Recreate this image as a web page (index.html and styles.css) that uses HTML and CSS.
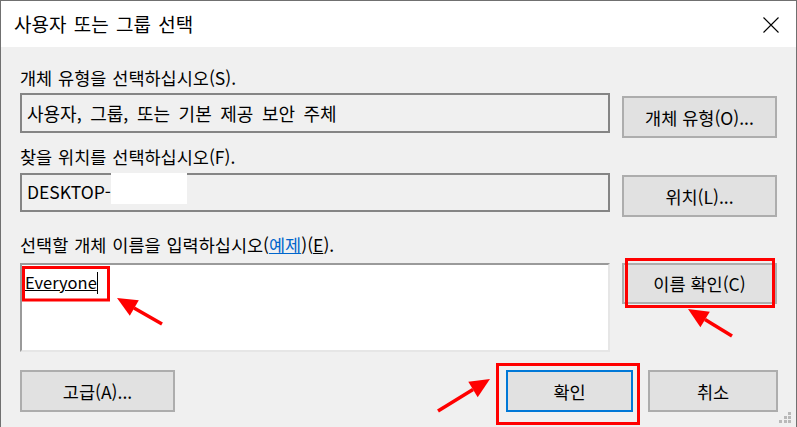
FILE: index.html
```html
<!DOCTYPE html>
<html lang="ko">
  <head>
    <meta charset="UTF-8" />
    <meta name="viewport" content="width=device-width, initial-scale=1.0" />
    <title>사용자 또는 그룹 선택</title>
    <link rel="stylesheet" href="styles.css">
  </head>
  <body>
    <div class="window">
      <div class="titlebar">
        <span class="title">사용자 또는 그룹 선택</span>
        <svg class="close-icon" width="16" height="16" viewBox="0 0 16 16">
          <path d="M0.5 0.5 L15.5 15.5 M15.5 0.5 L0.5 15.5" stroke="#000" stroke-width="1.1" fill="none" />
        </svg>
      </div>

      <div class="content">
        <div class="field">
          <div class="field-main">
            <div class="label">개체 유형을 선택하십시오(S).</div>
            <div class="readonly box-type">사용자, 그룹, 또는 기본 제공 보안 주체</div>
          </div>
          <button class="btn side-btn">개체 유형(O)...</button>
        </div>

        <div class="field field-location">
          <div class="field-main">
            <div class="label">찾을 위치를 선택하십시오(F).</div>
            <div class="readonly box-location">
              DESKTOP-<span class="redacted"></span>
            </div>
          </div>
          <button class="btn side-btn">위치(L)...</button>
        </div>

        <div class="field field-names">
          <div class="field-main">
            <div class="label">선택할 개체 이름을 입력하십시오(<a class="link" href="#">예제</a>)(<u>E</u>).</div>
            <div class="names-input">
              <span class="resolved">Everyone</span><span class="caret"></span>
            </div>
          </div>
          <button class="btn side-btn check-btn">이름 확인(C)</button>
        </div>

        <div class="actions">
          <button class="btn advanced-btn">고급(A)...</button>
          <button class="btn ok-btn">확인</button>
          <button class="btn cancel-btn">취소</button>
        </div>
      </div>

      <!-- annotations drawn over the dialog -->
      <svg class="overlay" width="797" height="427" viewBox="0 0 797 427">
        <g fill="none" stroke="#ff0000" stroke-width="3">
          <rect x="23.5" y="267.5" width="85" height="32.5" />
          <rect x="626.5" y="259.5" width="147" height="47" />
          <rect x="497.5" y="364.5" width="141" height="59" />
          <line x1="162" y1="324" x2="134" y2="308" stroke-width="3.5" />
          <line x1="732" y1="336" x2="705" y2="319.5" stroke-width="3.5" />
          <line x1="438" y1="411" x2="473" y2="389.5" stroke-width="3.5" />
        </g>
        <g fill="#ff0000">
          <polygon points="117,298 138.8,300.2 129.8,315.8" />
          <polygon points="688,309 709.8,311.8 700.4,327.2" />
          <polygon points="490,379 477.7,397.2 468.3,381.8" />
        </g>
        <g fill="#b9b9b9">
          <rect x="788" y="412" width="3" height="3" />
          <rect x="784" y="416" width="3" height="3" />
          <rect x="788" y="416" width="3" height="3" />
          <rect x="779" y="420" width="3" height="3" />
          <rect x="784" y="420" width="3" height="3" />
          <rect x="788" y="420" width="3" height="3" />
        </g>
      </svg>
    </div>
  </body>
</html>
```

FILE: styles.css
```css
body {
  margin: 0;
  font-family: "Noto Sans CJK KR", "Noto Sans", sans-serif;
  color: #000;
  background-color: #f0f0f0;
}

.window {
  position: relative;
  width: 795px;
  height: 426px;
  border: 1px solid #707070;
  border-bottom: none;
  background-color: #f0f0f0;
  overflow: hidden;
}

.titlebar {
  display: flex;
  align-items: center;
  justify-content: space-between;
  height: 46px;
  padding: 0 17px 0 13px;
  background: #fff;
}

.title {
  font-size: 19px;
  line-height: 24px;
  word-spacing: 2px;
}

.close-icon {
  display: block;
  margin-top: 1px;
}

.content {
  padding: 19px 18px 0 19px;
}

.field {
  display: flex;
  align-items: flex-start;
  gap: 12px;
}

.field-main {
  display: flex;
  flex-direction: column;
  width: 590px;
}

.label {
  font-size: 17.5px;
  line-height: 24px;
  height: 24px;
  word-spacing: 1px;
  white-space: nowrap;
}

.link {
  color: #0066cc;
  text-decoration: underline;
}

.readonly {
  box-sizing: border-box;
  display: flex;
  align-items: center;
  margin-top: 3px;
  height: 40px;
  padding: 0 5px;
  border: 2px solid #858585;
  font-size: 17.5px;
  white-space: nowrap;
}

.box-type {
  font-size: 18px;
  word-spacing: 3.5px;
}

.field-location {
  margin-top: 7px;
}

.box-location {
  align-items: flex-start;
  margin-top: 4px;
  height: 39px;
  line-height: 33px;
}

.redacted {
  display: inline-block;
  width: 76px;
  height: 31px;
  margin-top: -2px;
  background: #fff;
}

.field-names {
  margin-top: 16px;
}

.names-input {
  box-sizing: border-box;
  margin-top: 6px;
  height: 89px;
  padding: 5px 3px;
  background: #fff;
  border-top: 2px solid #9a9a9a;
  border-left: 2px solid #9a9a9a;
  border-right: 2px solid #e6e6e6;
  border-bottom: 2px solid #e6e6e6;
  font-size: 16.5px;
  line-height: 24px;
}

.resolved {
  text-decoration: underline;
}

.caret {
  display: inline-block;
  width: 1px;
  height: 22px;
  background: #000;
  vertical-align: -5px;
}

.btn {
  box-sizing: border-box;
  height: 42px;
  padding: 0;
  background: #e1e1e1;
  border: 2px solid #adadad;
  font-family: inherit;
  font-size: 17.5px;
  color: #000;
}

.side-btn {
  width: 155px;
  margin-top: 30px;
}

.check-btn {
  height: 41px;
}

.actions {
  display: flex;
  margin-top: 18px;
}

.advanced-btn {
  width: 155px;
}

.ok-btn {
  width: 127px;
  margin-left: auto;
  border-color: #0078d7;
}

.cancel-btn {
  width: 130px;
  margin-left: 15px;
}

.overlay {
  position: absolute;
  top: -1px;
  left: -1px;
  pointer-events: none;
}
```
